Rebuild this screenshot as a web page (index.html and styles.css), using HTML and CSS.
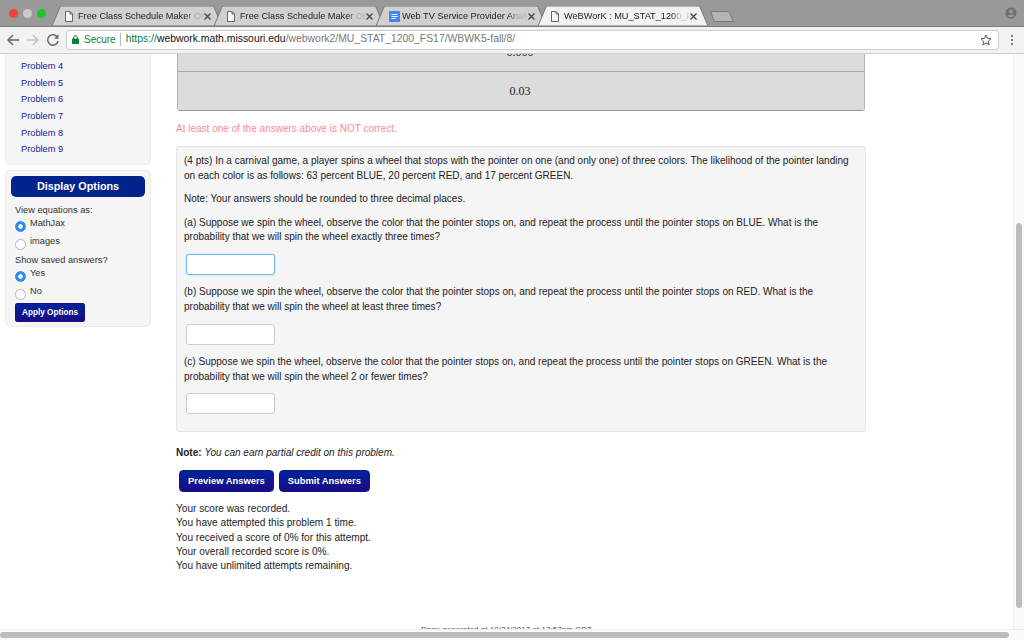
FILE: index.html
```html
<!DOCTYPE html>
<html lang="en">
<head>
<meta charset="utf-8">
<title>WeBWorK : MU_STAT_1200_FS17</title>
<link rel="stylesheet" href="styles.css">
</head>
<body>
<header class="tabbar">
  <div class="lights"><i class="light red"></i><i class="light grey"></i><i class="light green"></i></div>
  <div class="tabs">
    <div class="tab">
      <svg class="tab-shape" viewBox="0 0 170 20" preserveAspectRatio="none"><path d="M0 20 L8 1 Q8.5 0 10 0 L160 0 Q161.500 0 162 1 L170 20 Z"/></svg>
      <svg class="tab-icon" viewBox="0 0 8 11"><path d="M.5.5H5L7.500 3V10.500H.5Z M5 .5V3H7.500"/></svg>
      <span class="tab-title">Free Class Schedule Maker On</span>
      <svg class="tab-close" viewBox="0 0 7 7"><path d="M.5.5L6.500 6.500M6.500.5L.5 6.500"/></svg>
    </div>
    <div class="tab">
      <svg class="tab-shape" viewBox="0 0 170 20" preserveAspectRatio="none"><path d="M0 20 L8 1 Q8.5 0 10 0 L160 0 Q161.500 0 162 1 L170 20 Z"/></svg>
      <svg class="tab-icon" viewBox="0 0 8 11"><path d="M.5.5H5L7.500 3V10.500H.5Z M5 .5V3H7.500"/></svg>
      <span class="tab-title">Free Class Schedule Maker On</span>
      <svg class="tab-close" viewBox="0 0 7 7"><path d="M.5.5L6.500 6.500M6.500.5L.5 6.500"/></svg>
    </div>
    <div class="tab">
      <svg class="tab-shape" viewBox="0 0 170 20" preserveAspectRatio="none"><path d="M0 20 L8 1 Q8.5 0 10 0 L160 0 Q161.500 0 162 1 L170 20 Z"/></svg>
      <svg class="tab-icon docs" viewBox="0 0 11 11"><rect width="11" height="11" rx="1" fill="#4285f4"/><path d="M2.500 3.500H8.500M2.500 5.500H8.500M2.500 7.500H6.500" stroke="#fff"/></svg>
      <span class="tab-title">Web TV Service Provider Analy</span>
      <svg class="tab-close" viewBox="0 0 7 7"><path d="M.5.5L6.500 6.500M6.500.5L.5 6.500"/></svg>
    </div>
    <div class="tab active">
      <svg class="tab-shape" viewBox="0 0 170 20" preserveAspectRatio="none"><path d="M0 20 L8 1 Q8.5 0 10 0 L160 0 Q161.500 0 162 1 L170 20 Z"/></svg>
      <svg class="tab-icon" viewBox="0 0 8 11"><path d="M.5.5H5L7.500 3V10.500H.5Z M5 .5V3H7.500"/></svg>
      <span class="tab-title">WeBWorK : MU_STAT_1200_FS17</span>
      <svg class="tab-close" viewBox="0 0 7 7"><path d="M.5.5L6.500 6.500M6.500.5L.5 6.500"/></svg>
    </div>
    <svg class="newtab" viewBox="0 0 24 11"><path d="M.5.5H18Q19 .5 19.500 1.500L23.500 10.500H5Q4.500 10.500 4 9.500Z"/></svg>
  </div>
  <svg class="profile" viewBox="0 0 12 12"><circle cx="6" cy="6" r="5.500" fill="#6e6e6e"/><circle cx="6" cy="4.500" r="2" fill="#9a9a9a"/><path d="M2.500 9.200C3.500 7.300 8.500 7.300 9.500 9.200C8.500 10.300 3.500 10.300 2.500 9.200Z" fill="#9a9a9a"/></svg>
</header>

<nav class="toolbar">
  <svg class="nav-icon" viewBox="0 0 14 14"><path d="M13 7H2M7 2L2 7L7 12" fill="none" stroke="#666" stroke-width="1.500"/></svg>
  <svg class="nav-icon" viewBox="0 0 14 14"><path d="M1 7H12M7 2L12 7L7 12" fill="none" stroke="#c4c4c4" stroke-width="1.500"/></svg>
  <svg class="nav-icon" viewBox="0 0 14 14"><path d="M11.500 4.500A5.200 5.200 0 1 0 12 8" fill="none" stroke="#666" stroke-width="1.500"/><path d="M12.500 1.200V5.700H8Z" fill="#666"/></svg>
  <div class="omnibox">
    <svg class="lock" viewBox="0 0 7 9"><rect y="3.500" width="7" height="5.500" rx=".6" fill="#0b8043"/><path d="M1.700 4V2.500a1.800 1.800 0 0 1 3.600 0V4" fill="none" stroke="#0b8043"/></svg>
    <span class="secure">Secure</span>
    <span class="url"><span class="scheme">https://</span><span class="host">webwork.math.missouri.edu</span>/webwork2/MU_STAT_1200_FS17/WBWK5-fall/8/</span>
    <svg class="star" viewBox="0 0 12 12"><path d="M6 1L7.500 4.400L11 4.800L8.400 7.200L9.100 10.800L6 9L2.900 10.800L3.600 7.200L1 4.800L4.500 4.400Z" fill="none" stroke="#555"/></svg>
  </div>
  <div class="menu-dots"><i></i><i></i><i></i></div>
</nav>

<div class="viewport">
  <div class="page-row">
    <div class="page">
      <div class="columns">
        <aside class="sidebar">
          <ul class="panel problems">
            <li><a href="#">Problem 3</a></li>
            <li><a href="#">Problem 4</a></li>
            <li><a href="#">Problem 5</a></li>
            <li><a href="#">Problem 6</a></li>
            <li><a href="#">Problem 7</a></li>
            <li><a href="#">Problem 8</a></li>
            <li><a href="#">Problem 9</a></li>
          </ul>
          <form class="panel options">
            <h2 class="options-title">Display Options</h2>
            <div class="opt-label">View equations as:</div>
            <label class="opt"><input type="radio" name="eq" checked><span>MathJax</span></label>
            <label class="opt"><input type="radio" name="eq"><span>images</span></label>
            <div class="opt-label">Show saved answers?</div>
            <label class="opt"><input type="radio" name="sv" checked><span>Yes</span></label>
            <label class="opt"><input type="radio" name="sv"><span>No</span></label>
            <button type="button" class="btn btn-small">Apply Options</button>
          </form>
        </aside>
        <main class="main">
          <div class="results">
            <div class="result-row">0.000</div>
            <div class="result-row">0.03</div>
          </div>
          <p class="warning">At least one of the answers above is NOT correct.</p>
          <section class="problem">
            <p>(4 pts) In a carnival game, a player spins a wheel that stops with the pointer on one (and only one) of three colors. The likelihood of the pointer landing on each color is as follows: 63 percent BLUE, 20 percent RED, and 17 percent GREEN.</p>
            <p>Note: Your answers should be rounded to three decimal places.</p>
            <p>(a) Suppose we spin the wheel, observe the color that the pointer stops on, and repeat the process until the pointer stops on BLUE. What is the probability that we will spin the wheel exactly three times?</p>
            <input class="answer focused" type="text">
            <p>(b) Suppose we spin the wheel, observe the color that the pointer stops on, and repeat the process until the pointer stops on RED. What is the probability that we will spin the wheel at least three times?</p>
            <input class="answer" type="text">
            <p>(c) Suppose we spin the wheel, observe the color that the pointer stops on, and repeat the process until the pointer stops on GREEN. What is the probability that we will spin the wheel 2 or fewer times?</p>
            <input class="answer" type="text">
          </section>
          <p class="note"><b>Note:</b> <em>You can earn partial credit on this problem.</em></p>
          <div class="actions">
            <button type="button" class="btn">Preview Answers</button>
            <button type="button" class="btn">Submit Answers</button>
          </div>
          <div class="score">
            <div>Your score was recorded.</div>
            <div>You have attempted this problem 1 time.</div>
            <div>You received a score of 0% for this attempt.</div>
            <div>Your overall recorded score is 0%.</div>
            <div>You have unlimited attempts remaining.</div>
          </div>
        </main>
      </div>
      <footer class="generated">Page generated at 10/24/2017 at 12:57pm CDT</footer>
    </div>
    <div class="vscroll"><div class="vthumb"></div></div>
  </div>
  <div class="hscroll"><div class="hthumb"></div></div>
</div>
</body>
</html>
```
FILE: styles.css
```css
* { box-sizing: border-box; }
html, body { margin: 0; height: 100%; overflow: hidden; }
body {
  display: flex;
  flex-direction: column;
  width: 1024px;
  height: 640px;
  font: 10.020px/14.300px "Liberation Sans", Arial, sans-serif;
  color: #222;
  background: #fff;
}

/* tab strip */
.tabbar {
  flex: 0 0 26px;
  display: flex;
  background: #999;
  border-bottom: 1px solid #7d7d7d;
  position: relative;
}
.lights { display: flex; gap: 5px; width: 52px; padding: 8.5px 0 0 8.5px; }
.light { width: 9px; height: 9px; border-radius: 50%; }
.red { background: #f0413c; }
.grey { background: #c9c9c9; }
.green { background: #1fc52e; }
.tabs { display: flex; align-items: flex-end; height: 26px; }
.tab {
  position: relative;
  width: 170px;
  height: 20px;
  margin-right: -8px;
  display: flex;
  align-items: center;
  padding-left: 13px;
  font-size: 9.200px;
  color: #222;
}
.tab-shape {
  position: absolute;
  left: 0;
  top: 0;
  width: 100%;
  height: 100%;
  fill: #d0d0d0;
  stroke: #777;
  stroke-width: 1;
}
.active .tab-shape { fill: #f2f2f2; }
.tab-icon {
  position: relative;
  flex: 0 0 8px;
  width: 8px;
  height: 11px;
  fill: #f4f4f4;
  stroke: #666;
  stroke-width: 1;
  margin-right: 5px;
}
.tab-icon.docs { flex-basis: 11px; width: 11px; margin: 0 2px 0 0; stroke: none; }
.tab-title {
  position: relative;
  width: 125px;
  overflow: hidden;
  white-space: nowrap;
  -webkit-mask-image: linear-gradient(90deg, #000 86%, rgba(0,0,0,.25) 92%, rgba(0,0,0,.15) 100%);
  mask-image: linear-gradient(90deg, #000 86%, rgba(0,0,0,.25) 92%, rgba(0,0,0,.15) 100%);
}
.tab-close {
  position: relative;
  width: 7px;
  height: 7px;
  margin-left: 1px;
  stroke: #444;
  stroke-width: 1.300;
  fill: none;
}
.newtab {
  position: relative;
  width: 24px;
  height: 11px;
  margin: 0 0 4px 10px;
  fill: #b4b4b4;
  stroke: #777;
}
.profile { position: absolute; right: 7px; top: 7px; width: 12px; height: 12px; }

/* toolbar */
.toolbar {
  flex: 0 0 27px;
  display: flex;
  align-items: center;
  background: #f2f2f2;
  border-bottom: 1px solid #cfcfcf;
  padding: 0 0 1px 6px;
}
.nav-icon { width: 14px; height: 14px; margin-right: 6px; flex: none; }
.omnibox {
  width: 933px;
  height: 20px;
  display: flex;
  align-items: center;
  background: #fff;
  border: 1px solid #cdcdcd;
  border-radius: 3px;
  padding: 0 6px 0 5px;
  font-size: 10.400px;
  white-space: nowrap;
}
.lock { width: 7px; height: 9px; flex: none; margin-right: 5px; }
.secure {
  color: #0b8043;
  font-size: 10px;
  padding-right: 4px;
  margin-right: 5px;
  border-right: 1px solid #bbb;
  line-height: 13px;
}
.url { color: #777; flex: 1; }
.scheme { color: #0b8043; }
.host { color: #111; }
.star { width: 12px; height: 12px; flex: none; }
.menu-dots { display: flex; flex-direction: column; gap: 2px; margin-left: 12px; }
.menu-dots i { width: 2px; height: 2px; background: #555; border-radius: 50%; }

/* page */
.viewport { flex: 1; display: flex; flex-direction: column; min-height: 0; }
.page-row { flex: 1; display: flex; min-height: 0; }
.page { flex: 1; min-width: 0; overflow: hidden; }
.columns { display: flex; }
.sidebar { flex: 0 0 151px; padding-left: 5px; font-size: 9.250px; color: #333; }
.panel {
  margin: 0;
  list-style: none;
  background: #f5f5f5;
  border: 1px solid #ececec;
  border-radius: 5px;
}
.problems { margin-top: -12.500px; padding: 0 0 6px 15px; border-top: 0; }
.problems li { height: 16.670px; line-height: 16.670px; }
.problems a { color: #1a1a8c; text-decoration: none; }
.options { margin-top: 5px; padding: 5px; height: 156.500px; }
.options-title {
  margin: 0 0 5.500px;
  height: 21px;
  background: #00248c;
  border-radius: 5px;
  color: #fff;
  font-size: 10.800px;
  line-height: 21px;
  text-align: center;
}
.opt-label { padding-left: 4px; height: 14px; line-height: 14px; }
.opt { display: flex; height: 18px; padding-left: 4px; line-height: 12px; }
.opt input {
  appearance: none;
  -webkit-appearance: none;
  width: 11px;
  height: 11px;
  margin: 4px 4px 0 0;
  border: 1px solid #b5b5b5;
  border-radius: 50%;
  background: #fff;
}
.opt input:checked { border-color: #2c8cf4; background: radial-gradient(circle, #fff 0 2px, #2c8cf4 2.500px); }
.btn {
  height: 22px;
  margin: 0;
  padding: 0 8px;
  font: bold 9.400px/20px "Liberation Sans", Arial, sans-serif;
  color: #fff;
  background: linear-gradient(#00249a, #1c0a88);
  border: 1px solid #14148a;
  border-radius: 4px;
}
.btn-small { display: block; height: 19px; width: 70px; margin: 0 0 0 4px; padding: 0; font-size: 8.200px; line-height: 17px; border-radius: 2px; }

.main { width: 690px; margin-left: 25px; flex: none; }
.results { width: 688px; margin: -23px 0 0 1px; border: 1px solid #b5b5b5; border-top: 0; border-bottom-color: #999; border-radius: 0 0 3px 3px; }
.result-row {
  height: 39.500px;
  padding-right: 2px;
  background: #dcdcdc;
  font: 12px/39px "Liberation Serif", "Times New Roman", serif;
  text-align: center;
}
.result-row:first-child { line-height: 42px; }
.result-row + .result-row { border-top: 1px solid #a9a9a9; }
.warning { margin: 11px 0 10px; color: #ff8a90; line-height: 14px; }
.problem {
  background: #f5f5f5;
  border: 1px solid #e6e6e6;
  border-radius: 3px;
  padding: 7px 7px 7px;
  height: 286px;
  line-height: 14.600px;
}
.problem p { margin: 0 0 9px; }
.answer {
  display: block;
  width: 89px;
  height: 21px;
  margin: 9px 0 10.500px 2px;
  background: #fff;
  border: 1px solid #ccc;
  border-radius: 3px;
}
.answer.focused { border-color: #74bcf6; box-shadow: 0 0 2px #9fd0fa; }
.note { margin: 14px 0 10px; line-height: 14px; }
.actions { display: flex; gap: 5px; margin: 0 0 10px 3px; }
.score { font-size: 10.100px; }
.score div { height: 14.300px; line-height: 14.300px; }
.generated { margin-top: 50px; text-align: center; font-size: 8.100px; color: #555; }

/* scrollbars */
.vscroll {
  flex: 0 0 11px;
  background: #fafafa;
  border-left: 1px solid #ececec;
  padding: 169px 2px 0 2px;
}
.vthumb { width: 6px; height: 385px; background: #bdbdbd; border-radius: 3px; }
.hscroll {
  flex: 0 0 11px;
  background: #fafafa;
  border-top: 1px solid #ececec;
  padding-top: 2px;
}
.hthumb { width: 1009px; height: 6px; background: #bdbdbd; border-radius: 3px; }
```
